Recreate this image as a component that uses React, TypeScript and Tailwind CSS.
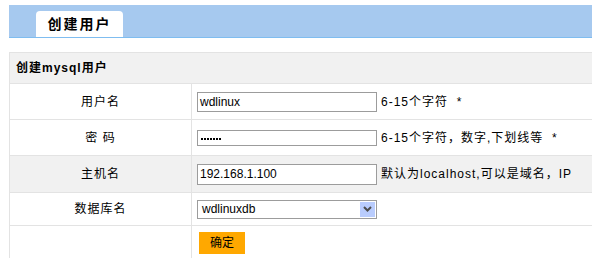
import React from "react";

const font = { fontFamily: '"Liberation Sans", "Noto Sans CJK SC", sans-serif' };

function Row({
  label,
  children,
  note,
  gray,
  h,
}: {
  label: React.ReactNode;
  children?: React.ReactNode;
  note?: React.ReactNode;
  gray?: boolean;
  h: string;
}) {
  return (
    <div className={`flex border-b border-[#e3e3e3] ${gray ? "bg-[#f1f1f1]" : "bg-white"} ${h}`}>
      <div className="w-[182px] shrink-0 flex items-center justify-center border-r border-[#e3e3e3] text-[12px] text-black tracking-[1px]">
        {label}
      </div>
      <div className="flex items-center pl-[5px] text-[12px] text-black">
        {children}
        {note && <span className="ml-[4px] whitespace-pre tracking-[1px]">{note}</span>}
      </div>
    </div>
  );
}

export default function App() {
  return (
    <div className="w-[592px] h-[258px] overflow-hidden bg-white pt-[5px] pl-[9px]" style={font}>
      <div className="h-[33px] bg-[#a6c9ef] border-b border-[#7fbdf0] flex items-end pl-[27px]">
        <div className="w-[87px] h-[26px] bg-white rounded-t-[4px] flex items-center justify-center text-[14px] font-bold tracking-[2px] text-black">
          创建用户
        </div>
      </div>
      <div className="mt-[14px] border-t border-l border-[#e3e3e3]">
        <div className="h-[31px] bg-[#f1f1f1] border-b border-[#e3e3e3] flex items-center pl-[6px] text-[12px] font-bold tracking-[1px] text-black">
          创建mysql用户
        </div>
        <Row label="用户名" note={"6-15个字符  *"} h="h-[36px]">
          <div className="w-[180px] h-[20px] border border-[#9c9c9c] bg-white flex items-center pl-[2px] text-[12px]">
            wdlinux
          </div>
        </Row>
        <Row label={<span>密&nbsp;码</span>} note={"6-15个字符，数字,下划线等  *"} h="h-[36px]">
          <div className="w-[180px] h-[16px] border border-[#9c9c9c] bg-white flex items-end pb-[5px] pl-[3px]">
            <div className="flex">
              {Array.from({ length: 7 }).map((_, i) => (
                <span key={i} className="w-[2px] h-[2px] bg-black mr-[1px]" />
              ))}
            </div>
          </div>
        </Row>
        <Row label="主机名" note="默认为localhost,可以是域名，IP" gray h="h-[37px]">
          <div className="w-[180px] h-[21px] border border-[#9c9c9c] bg-white flex items-center pl-[2px] text-[12px]">
            192.168.1.100
          </div>
        </Row>
        <Row label="数据库名" h="h-[33px]">
          <div className="w-[180px] h-[19px] border border-[#9c9c9c] bg-white flex items-center justify-between pl-[4px] pr-[1px] text-[12px]">
            <span>wdlinuxdb</span>
            <div className="w-[15px] h-[15px] bg-[#b9ccfd] flex items-center justify-center">
              <svg width="9" height="6" viewBox="0 0 9 6">
                <path d="M1 1 L4.5 4.5 L8 1" stroke="#4d4d4d" strokeWidth="2" fill="none" />
              </svg>
            </div>
          </div>
        </Row>
        <Row label="" h="h-[40px]">
          <div className="mt-[-6px] ml-[2px] w-[46px] h-[22px] bg-[#ffa800] flex items-center justify-center text-[12px] text-black">
            确定
          </div>
        </Row>
      </div>
    </div>
  );
}
